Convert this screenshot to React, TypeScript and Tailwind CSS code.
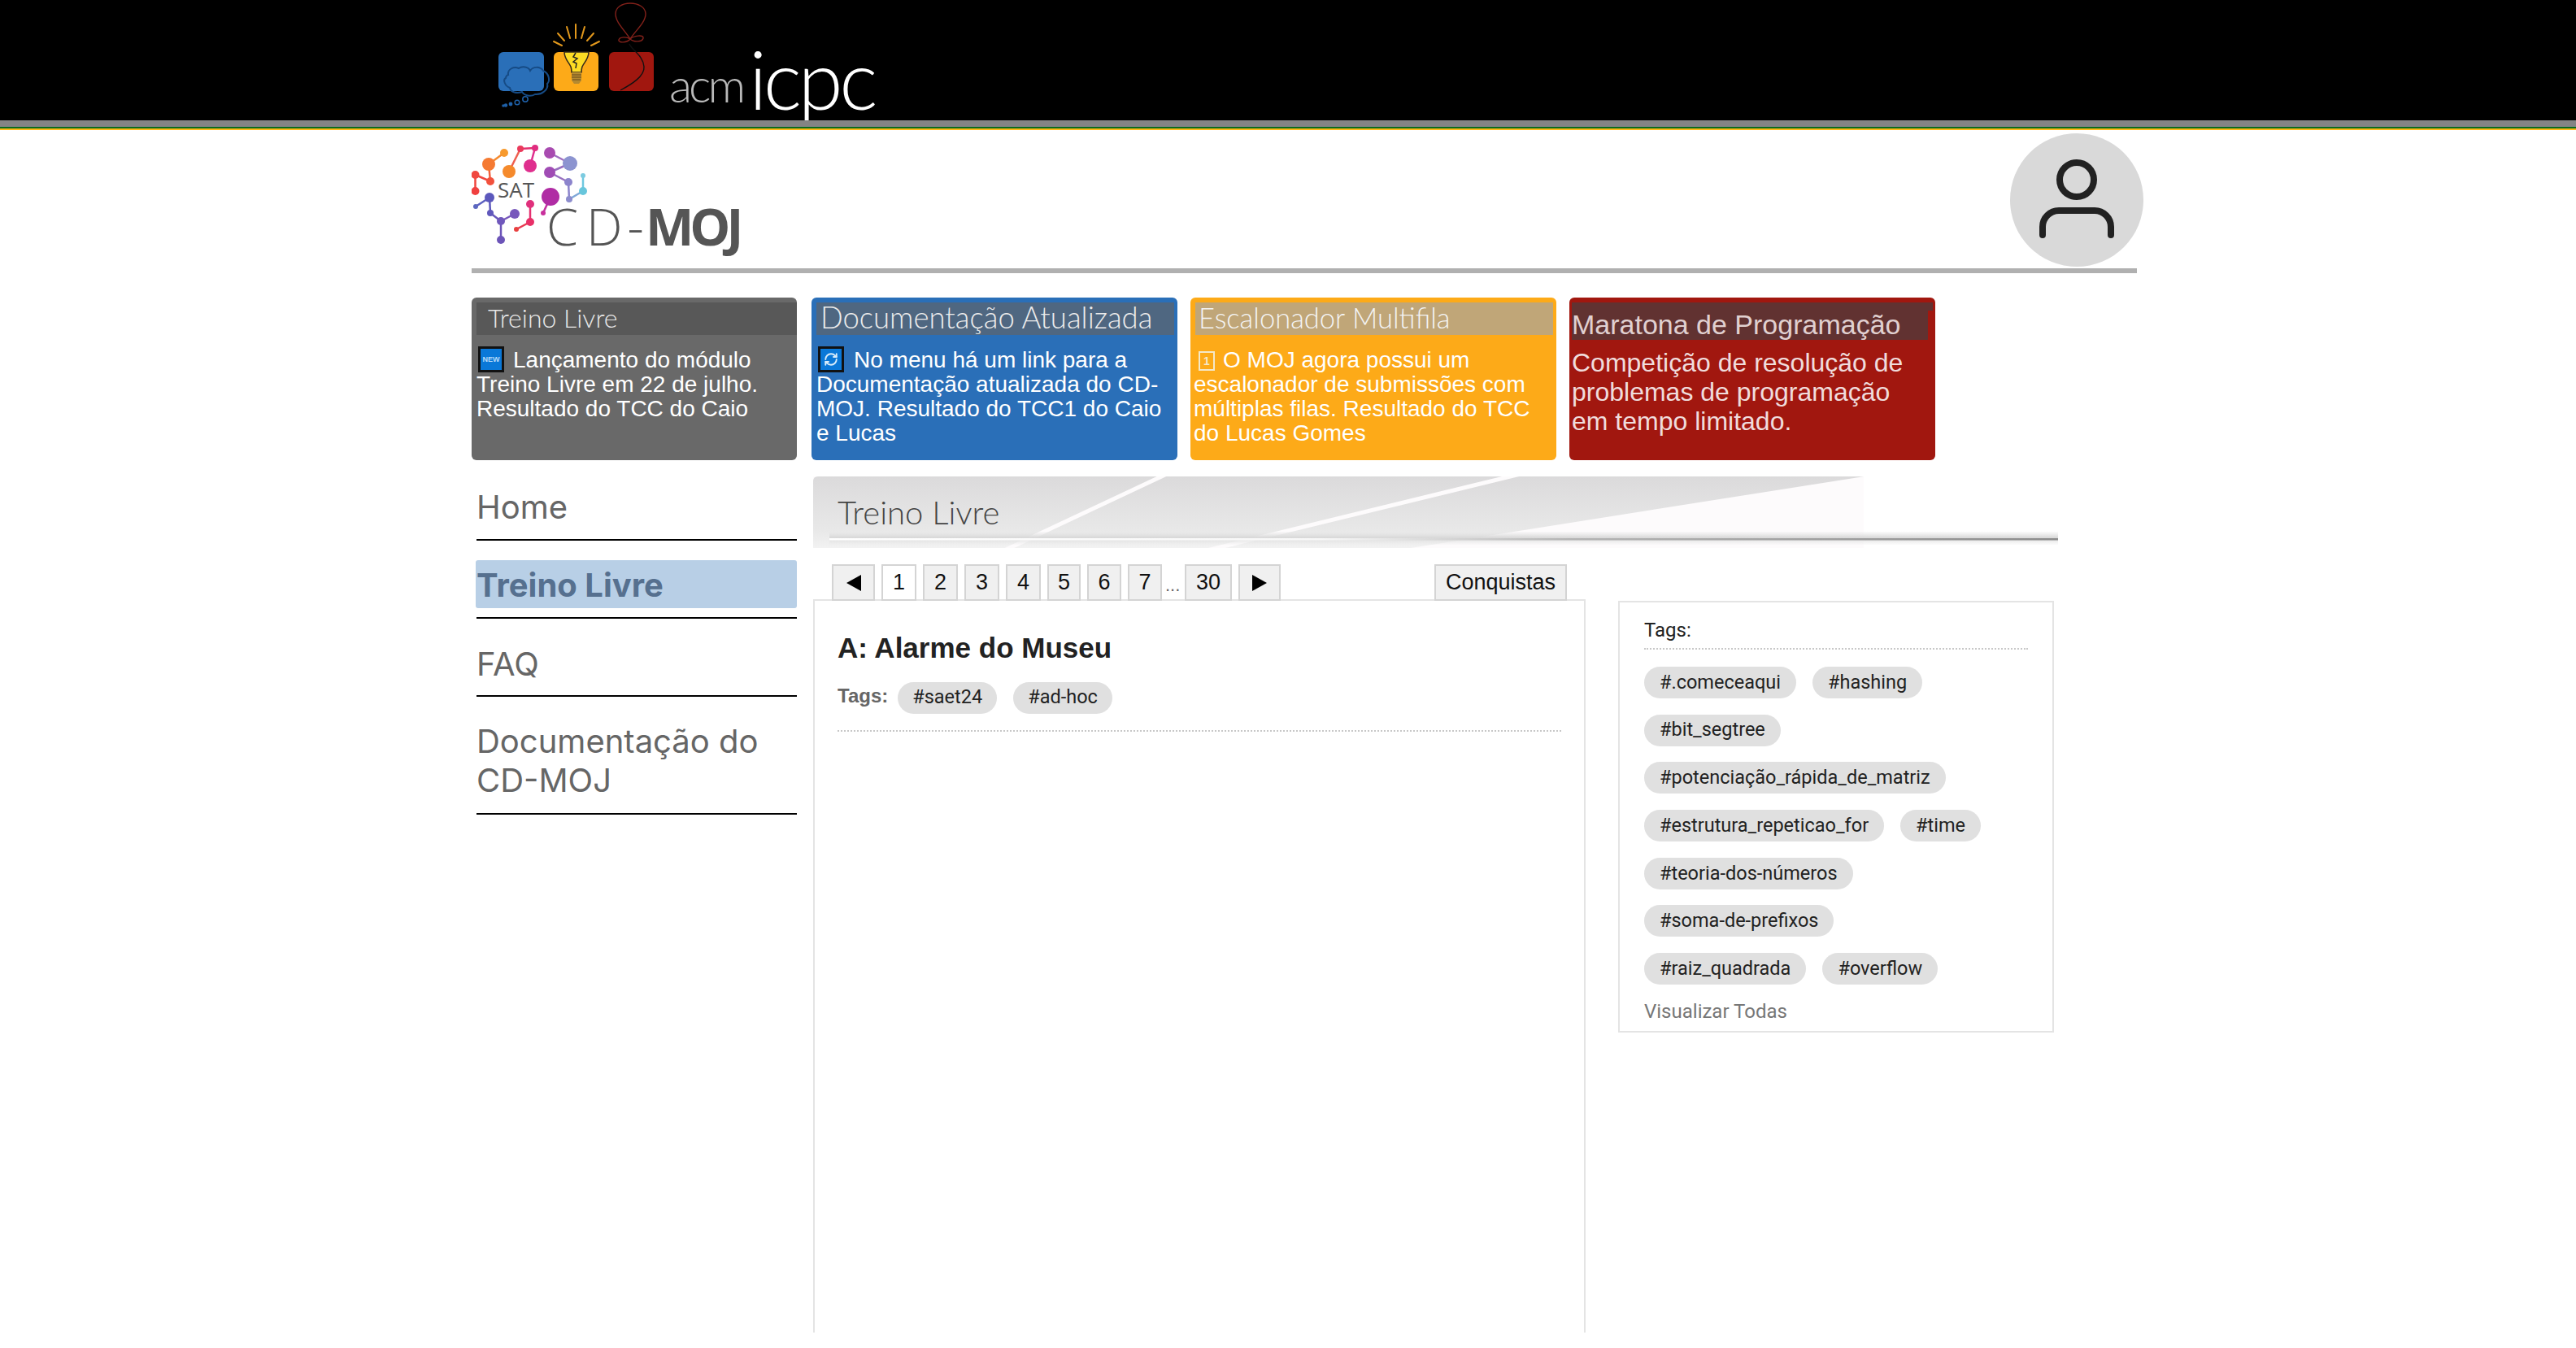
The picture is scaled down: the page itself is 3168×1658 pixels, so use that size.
import { RefreshCw } from "lucide-react";

const sat: [number, number, number, string][] = [
  [584.5, 215, 5, "#f0473f"], [584.5, 235, 5, "#f0403f"], [603, 223, 5, "#f2513c"], [601, 202, 8, "#f57a32"],
  [620, 188, 5, "#f79a2e"], [626, 211, 8, "#f58a2c"], [640, 183, 4, "#ea3a5c"], [658, 182, 4, "#e02c80"],
  [652, 204, 8, "#df2f8e"], [676, 188, 7, "#a84bb0"], [701, 201, 9, "#8c94d0"], [676, 212, 7, "#a04cb4"],
  [699, 224, 5, "#8c84cc"], [717, 216, 3, "#7ccbe0"], [717, 235, 5, "#68c6dc"], [700, 245, 4, "#8c8ccc"],
  [677, 242, 11, "#b02ca4"], [668, 262, 3, "#c8309c"], [652, 251, 5, "#e0307c"], [652, 273, 5, "#e83068"],
  [635, 282, 3, "#e8403f"], [602, 243, 6, "#5c58bc"], [585, 254, 3, "#5c68c0"], [603, 262, 4, "#6058bc"],
  [633, 263, 6, "#7858bc"], [616, 272, 5, "#7058bc"], [616, 295, 5, "#6c54b8"],
];
const satEdges: [number, number, number, number, string][] = [
  [584.5, 215, 584.5, 235, "#f0473f"], [584.5, 215, 603, 223, "#f0473f"], [603, 223, 601, 202, "#f2613c"],
  [601, 202, 620, 188, "#f58a30"], [626, 211, 640, 183, "#ee6050"], [640, 183, 658, 182, "#e43070"],
  [658, 182, 652, 204, "#df2f8e"], [676, 188, 701, 201, "#a070c0"], [676, 212, 701, 201, "#9870c0"],
  [676, 212, 699, 224, "#9870c0"], [699, 224, 700, 245, "#8c84cc"], [700, 245, 717, 235, "#80a8d8"],
  [717, 235, 717, 216, "#70c8e0"], [677, 242, 668, 262, "#c030a0"], [652, 251, 652, 273, "#e43070"],
  [652, 273, 635, 282, "#e83850"], [602, 243, 585, 254, "#5c60c0"], [602, 243, 603, 262, "#5c58bc"],
  [603, 262, 616, 272, "#6858bc"], [633, 263, 616, 272, "#7858bc"], [616, 272, 616, 295, "#6c54b8"],
];

function IcpcArt() {
  return (
    <svg width="240" height="148" viewBox="590 0 240 148" className="block shrink-0">
      <rect x="613" y="64" width="56" height="48" rx="6" fill="#2a6fb8" />
      <rect x="681" y="64" width="55" height="48" rx="6" fill="#fdaa18" />
      <rect x="749" y="64" width="55" height="48" rx="6" fill="#a1170f" />
      <path d="M625 92C624 85 632 81 638 84C642 81 650 82 652 87C655 82 664 81 668 87C675 90 677 99 673 103C675 110 666 117 658 116C653 119 645 118 642 113C636 115 628 114 627 108C621 106 618 98 622 96C622 94 624 92 625 92z" fill="none" stroke="#164b85" strokeWidth="2" />
      <circle cx="646" cy="122" r="3.200" fill="none" stroke="#1e60a8" strokeWidth="1.500" />
      <circle cx="636" cy="126" r="2.800" fill="none" stroke="#1e60a8" strokeWidth="1.500" />
      <circle cx="628" cy="128" r="2.400" fill="#1e60a8" />
      <circle cx="622" cy="129.500" r="2.200" fill="#1e60a8" />
      <circle cx="619" cy="130" r="1.800" fill="#1e60a8" />
      <g stroke="#e2981c" strokeWidth="2" strokeLinecap="round">
        <path d="M708 30v17M697 33l4 14M719 33l-4 14M686 41l8 9M730 41l-8 9M681 51l10 5M737 51l-10 5" />
      </g>
      <path d="M694 64c0 8 5 12 8 18 1 3 1 4 1 7h12c0-3 0-4 1-7 3-6 8-10 8-18z" fill="#fddc24" stroke="#33281a" strokeWidth="1.500" />
      <path d="M708 65l-3 5 5 2-5 4 4 2-1 6" fill="none" stroke="#222" strokeWidth="1.500" />
      <path d="M703 89h12v10l-3 4h-6l-3-4z" fill="#b58a30" />
      <path d="M703 92h12M703 95h12M704 98h10" stroke="#5c4218" strokeWidth="0.900" />
      <path d="M775 48c-6-10-18-20-18-31 0-8 8-13 18-13s19 5 19 13c0 11-13 21-19 31z" fill="none" stroke="#82211a" strokeWidth="1.400" />
      <path d="M775 48c-4-3-13-3-14 1s10 4 14-1c4 4 15 4 16-1s-12-3-16 1z" fill="none" stroke="#82211a" strokeWidth="1.400" />
      <path d="M774 54c3 8 17 14 18 28 1 12-16 22-29 29" fill="none" stroke="#111" strokeWidth="1.400" />
    </svg>
  );
}

function SatArt() {
  return (
    <svg width="145" height="125" viewBox="580 178 145 125" className="absolute left-0 top-[18px]">
      {satEdges.map((e, i) => (
        <line key={i} x1={e[0]} y1={e[1]} x2={e[2]} y2={e[3]} stroke={e[4]} strokeWidth="2.500" />
      ))}
      {sat.map((n, i) => (
        <circle key={i} cx={n[0]} cy={n[1]} r={n[2]} fill={n[3]} />
      ))}
    </svg>
  );
}

function Chip({ children, tight }: { children: string; tight?: boolean }) {
  return (
    <span className={`inline-flex h-[39px] items-center rounded-full bg-[#e0e0e0] font-['Roboto',sans-serif] text-[23.500px] leading-none text-[#222] ${tight ? "px-[18px]" : "px-[19px]"}`}>
      {children}
    </span>
  );
}

function PageBtn({ children, w, active }: { children: React.ReactNode; w: string; active?: boolean }) {
  return (
    <span className={`relative -mb-[2px] inline-flex h-[45px] items-center justify-center border-2 border-[#d4d4d4] text-[27px] text-[#111] ${w} ${active ? "bg-white" : "bg-[#f0f0f0]"}`}>
      {children}
    </span>
  );
}

const navText = "block font-['Inter',sans-serif] text-[40px] leading-[48px] text-[#666]";
const body = "text-[28px] leading-[30px] text-white";
const stripFont = "font-['Lato',sans-serif] font-light pb-[3px]";
const tagRows = [
  ["#.comeceaqui", "#hashing"],
  ["#bit_segtree"],
  ["#potenciação_rápida_de_matriz"],
  ["#estrutura_repeticao_for", "#time"],
  ["#teoria-dos-números"],
  ["#soma-de-prefixos"],
  ["#raiz_quadrada", "#overflow"],
];

export default function App() {
  return (
    <div className="min-h-[1658px] bg-white font-['Liberation_Sans',Arial,sans-serif]">
      <header className="flex h-[148px] items-end overflow-hidden bg-black pl-[590px]">
        <IcpcArt />
        <span className="mb-[15px] ml-[-7px] font-['Lato',sans-serif] text-[58px] font-light leading-none tracking-[-4px] text-[#b9b9b9]">acm</span>
        <span className="mb-[2px] ml-[8px] font-['Lato',sans-serif] text-[100px] font-light leading-none tracking-[-4.500px] text-white">icpc</span>
      </header>
      <div className="h-[8px] bg-[#848484]" />
      <div className="h-[2px] bg-[#0a6b1e]" />
      <div className="h-[2px] bg-[#fdb714]" />

      <div className="ml-[580px] w-[2048px]">
        <div className="relative flex h-[170px] items-start justify-end">
          <SatArt />
          <span className="absolute left-[32px] top-[60px] font-['Open_Sans',sans-serif] text-[26px] leading-[26px] text-[#555]">SAT</span>
          <span className="absolute left-[92px] top-[83px] whitespace-nowrap font-['Open_Sans',sans-serif] text-[63px] font-light leading-[70px] text-[#555]">
            <span className="tracking-[10px]">C</span>
            <span className="tracking-[6px]">D</span>
            <span className="mr-[2px]">-</span>
            <span className="font-bold tracking-[-5px]">MOJ</span>
          </span>
          <div className="mr-[-8px] mt-[4px] flex h-[164px] w-[164px] items-center justify-center rounded-full bg-[#d9d9d9]">
            <svg width="100" height="100" viewBox="0 0 100 100" className="overflow-visible">
              <circle cx="50" cy="25" r="21" fill="none" stroke="#222" strokeWidth="8" />
              <path d="M8 93V83c0-11 9-20 20-20h44c11 0 20 9 20 20v10" fill="none" stroke="#222" strokeWidth="8" strokeLinecap="round" />
            </svg>
          </div>
        </div>
        <div className="h-[6px] bg-[#b0b0b0]" />

        <div className="mt-[30px] flex gap-[18px]">
          <div className="h-[200px] w-[400px] rounded-[6px] bg-[#696969] pl-[6px] pt-[6px]">
            <div className={`flex h-[40px] items-center bg-[#585858] pl-[14px] text-[32px] text-[#e8e8e8] ${stripFont}`}>Treino Livre</div>
            <p className={`mt-[16px] ${body}`}>
              <span className="mb-[-2px] ml-[2px] mr-[11px] mt-[-2px] inline-flex h-[32px] w-[32px] items-center justify-center border-[3px] border-[#111] bg-[#0a78d8] align-top text-[9px] font-bold leading-none text-[#b8dcf8]">NEW</span>
              Lançamento do módulo Treino Livre em 22 de julho. Resultado do TCC do Caio
            </p>
          </div>
          <div className="h-[200px] w-[450px] rounded-[6px] bg-[#2a6fb8] pl-[6px] pt-[6px]">
            <div className={`mr-[4px] flex h-[40px] items-center bg-[#4f6781] pl-[5px] text-[36.500px] text-[#ececec] ${stripFont}`}>Documentação Atualizada</div>
            <p className={`mt-[16px] ${body}`}>
              <span className="mb-[-2px] ml-[2px] mr-[12px] mt-[-2px] inline-flex h-[32px] w-[32px] items-center justify-center border-[3px] border-[#111] bg-[#0a78d8] align-top">
                <RefreshCw size={18} color="#d8ecfa" strokeWidth={2.500} />
              </span>
              No menu há um link para a Documentação atualizada do CD-MOJ. Resultado do TCC1 do Caio e Lucas
            </p>
          </div>
          <div className="ml-[-2px] h-[200px] w-[450px] rounded-[6px] bg-[#fdaa18] pl-[6px] pt-[6px]">
            <div className={`mr-[4px] flex h-[40px] items-center bg-[#c0a678] pl-[4px] text-[34.500px] text-[#f4f4f4] ${stripFont}`}>Escalonador Multifila</div>
            <p className={`ml-[-2px] mt-[16px] ${body}`}>
              <span className="ml-[6px] mr-[10px] mt-[4px] inline-flex h-[24px] w-[20px] items-center justify-center border-2 border-[#f4e8c8] align-top text-[14px] font-bold leading-none text-[#f4e8c8]">1</span>
              O MOJ agora possui um escalonador de submissões com múltiplas filas. Resultado do TCC do Lucas Gomes
            </p>
          </div>
          <div className="ml-[-2px] h-[200px] w-[450px] rounded-[6px] bg-[#a1170f] pl-[3px] pt-[6px]">
            <div className="mr-[3px] h-[10px] bg-[#613231]" />
            <div className="mr-[9px] flex h-[36px] items-end bg-[#613231] text-[34px] leading-[38px] text-[#e0d0d0]">Maratona de Programação</div>
            <p className="mt-[10px] pr-2 text-[32px] leading-[36px] text-[#f0dcdc]">Competição de resolução de problemas de programação em tempo limitado.</p>
          </div>
        </div>

        <div className="mt-[20px] flex items-start">
          <nav className="ml-[6px] w-[394px] shrink-0">
            <div className="border-b-[2.500px] border-black pb-[15px] pt-[14px]"><span className={navText}>Home</span></div>
            <div className="mt-[23.500px] border-b-[2.500px] border-black pb-[11px]">
              <span className="-ml-px block h-[59px] rounded-[3px] bg-[#b8cfe6] pl-px pt-[7px] font-['Inter',sans-serif] text-[40px] font-bold leading-[48px] text-[#56708f]">Treino Livre</span>
            </div>
            <div className="mt-[32px] border-b-[2.500px] border-black pb-[14px]"><span className={navText}>FAQ</span></div>
            <div className="mt-[31.500px] border-b-[2.500px] border-black pb-[15.500px]"><span className={navText}>Documentação do CD-MOJ</span></div>
          </nav>

          <main className="ml-[20px] w-[1531px]">
            <div className="relative h-[88px] overflow-hidden">
              <svg className="absolute inset-0" width="1531" height="88" viewBox="0 0 1531 88">
                <defs>
                  <linearGradient id="sh" x1="0" x2="0" y1="0" y2="1">
                    <stop offset="0" stopColor="#dbdadb" />
                    <stop offset="0.75" stopColor="#e8e8e8" />
                    <stop offset="1" stopColor="#f2f2f2" />
                  </linearGradient>
                  <linearGradient id="ln" x1="0" x2="1" y1="0" y2="0">
                    <stop offset="0" stopColor="#ffffff" />
                    <stop offset="0.4" stopColor="#f8f8f8" />
                    <stop offset="0.6" stopColor="#b4b4b4" />
                    <stop offset="1" stopColor="#8c8c8c" />
                  </linearGradient>
                  <linearGradient id="band" x1="0" x2="0" y1="0" y2="1">
                    <stop offset="0" stopColor="#e6e6e6" stopOpacity="0.2" />
                    <stop offset="0.45" stopColor="#d8d8d8" />
                    <stop offset="1" stopColor="#ececec" stopOpacity="0.2" />
                  </linearGradient>
                </defs>
                <rect x="0" y="0" width="1292" height="88" fill="#fdfbfc" />
                <path d="M0 6Q0 0 6 0H1292L735 88H0z" fill="url(#sh)" />
                <path d="M437 -4L233 92M874 -4L480 92" stroke="#fdfbfc" strokeWidth="5" />
                <rect x="20" y="68" width="1511" height="16" fill="url(#band)" />
                <rect x="20" y="76" width="1511" height="2.500" fill="url(#ln)" />
              </svg>
              <span className="absolute left-[30px] top-[20px] font-['Lato',sans-serif] text-[40px] font-light leading-[48px] text-[#444]">Treino Livre</span>
            </div>

            <div className="flex">
              <div className="w-[950px] shrink-0">
                <div className="relative flex h-[63px] items-end gap-[8px] pl-[23px]">
                  <PageBtn w="w-[53px]"><span className="inline-block h-0 w-0 border-y-[10px] border-r-[18px] border-y-transparent border-r-black" /></PageBtn>
                  <PageBtn w="w-[43px]" active>1</PageBtn>
                  <PageBtn w="w-[43px]">2</PageBtn>
                  <PageBtn w="w-[43px]">3</PageBtn>
                  <PageBtn w="w-[43px]">4</PageBtn>
                  <PageBtn w="w-[41px]">5</PageBtn>
                  <PageBtn w="w-[42px]">6</PageBtn>
                  <PageBtn w="w-[42px]">7</PageBtn>
                  <span className="mx-[-4px] w-[20px] pb-[6px] text-[22px] leading-none text-[#666]">...</span>
                  <PageBtn w="w-[58px]">30</PageBtn>
                  <PageBtn w="w-[52px]"><span className="inline-block h-0 w-0 border-y-[10px] border-l-[18px] border-y-transparent border-l-black" /></PageBtn>
                  <span className="absolute left-[764px]">
                    <PageBtn w="w-[163px]">Conquistas</PageBtn>
                  </span>
                </div>
                <div className="h-[902px] border-x-2 border-t-2 border-[#e4e4e4] px-[28px] pt-[38px]">
                  <h1 className="text-[35px] font-bold leading-[40px] text-[#222]">A: Alarme do Museu</h1>
                  <div className="mt-[21px] flex items-center border-b-2 border-dotted border-[#c8c8c8] pb-[20px]">
                    <span className="mb-[4px] mr-[12px] text-[24px] font-bold text-[#666]">Tags:</span>
                    <span className="mr-[20px]"><Chip tight>#saet24</Chip></span>
                    <Chip tight>#ad-hoc</Chip>
                  </div>
                </div>
              </div>
              <aside className="ml-[40px] mt-[65px] h-[531px] w-[536px] shrink-0 border-2 border-[#e4e4e4] px-[30px] pt-[20px]">
                <div className="border-b-2 border-dotted border-[#c8c8c8] pb-[8px] font-['Roboto',sans-serif] text-[24px] leading-[28px] text-[#222]">Tags:</div>
                <div className="mt-[21px] flex flex-col gap-y-[19.700px]">
                  {tagRows.map((row) => (
                    <div key={row[0]} className="flex gap-x-[20px]">
                      {row.map((t) => (
                        <Chip key={t}>{t}</Chip>
                      ))}
                    </div>
                  ))}
                </div>
                <div className="mt-[19px] font-['Roboto',sans-serif] text-[24px] leading-[28px] text-[#777]">Visualizar Todas</div>
              </aside>
            </div>
          </main>
        </div>
      </div>
    </div>
  );
}
